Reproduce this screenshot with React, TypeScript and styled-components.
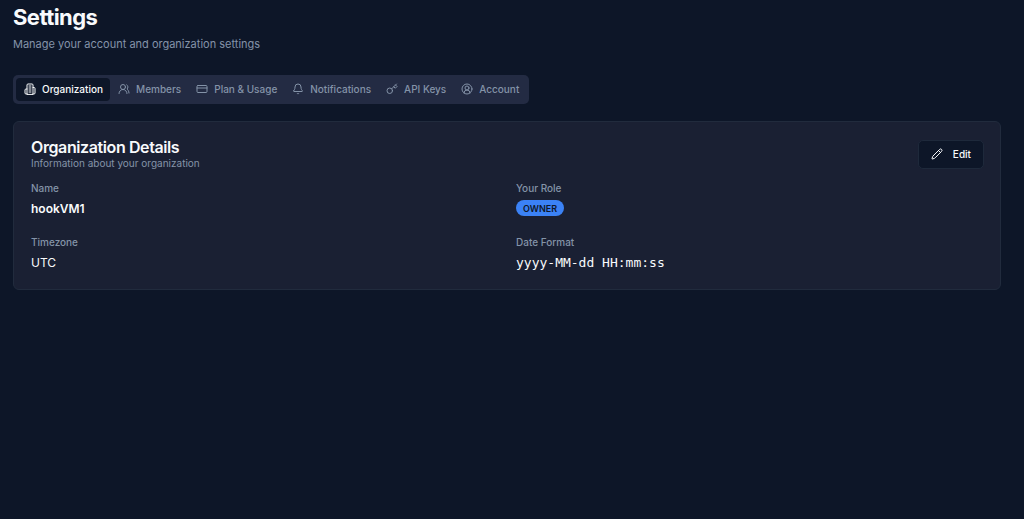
import React from "react";
import styled, { createGlobalStyle, css } from "styled-components";
import { UsersRound, CreditCard, Bell, CircleUserRound, Pencil } from "lucide-react";

const GlobalStyle = createGlobalStyle`
  *, *::before, *::after { box-sizing: border-box; }
  body {
    margin: 0;
    min-height: 100vh;
    background: #0d1628;
    color: #f8fafc;
    font-family: Inter, "Liberation Sans", sans-serif;
  }
`;

const Page = styled.main`
  padding: 4px 23px 24px 13px;
`;

const Title = styled.h1`
  margin: 0;
  font-size: 22px;
  line-height: 26px;
  font-weight: 700;
  letter-spacing: -0.025em;
`;

const Subtitle = styled.p`
  margin: 6px 0 0;
  font-size: 11px;
  line-height: 16px;
  color: #8493a8;
`;

const TabList = styled.div`
  display: inline-flex;
  margin-top: 23px;
  padding: 3px;
  border-radius: 5px;
  background: #232b43;
`;

const Tab = styled.button<{ $active?: boolean }>`
  display: inline-flex;
  align-items: center;
  gap: 6px;
  height: 23px;
  padding: 0 7px 1px 8px;
  border: 0;
  border-radius: 4px;
  background: transparent;
  color: #8493a8;
  font: inherit;
  font-size: 10px;
  line-height: 14px;
  font-weight: 500;
  white-space: nowrap;
  ${(p) => p.$active && css`
    background: #0d1628;
    color: #f8fafc;
  `}
`;

const Card = styled.section`
  margin-top: 17px;
  padding: 17px 16px 17px 17px;
  border: 1px solid #212b3d;
  border-radius: 6px;
  background: #1a2033;
`;

const CardHeader = styled.header`
  display: flex;
  align-items: center;
  justify-content: space-between;
`;

const CardTitle = styled.h2`
  margin: 0;
  font-size: 16px;
  line-height: 17px;
  font-weight: 600;
  letter-spacing: -0.025em;
`;

const CardDescription = styled.p`
  margin: 0;
  font-size: 10px;
  line-height: 14px;
  color: #8493a8;
`;

const EditButton = styled.button`
  display: inline-flex;
  align-items: center;
  gap: 10px;
  height: 29px;
  padding: 0 12px 1px;
  border: 1px solid #1e293b;
  border-radius: 5px;
  background: #0d1628;
  color: #f8fafc;
  font: inherit;
  font-size: 10px;
  line-height: 14px;
  font-weight: 500;
`;

const Details = styled.dl`
  display: grid;
  grid-template-columns: 1fr 1fr;
  gap: 17px;
  margin: 11px 0 0;
`;

const Term = styled.dt`
  font-size: 10px;
  line-height: 14px;
  font-weight: 500;
  color: #8493a8;
`;

const Value = styled.dd<{ $strong?: boolean; $mono?: boolean }>`
  display: flex;
  align-items: center;
  height: 20px;
  margin: 3px 0 0;
  font-size: ${(p) => (p.$mono ? 13 : 12)}px;
  font-weight: ${(p) => (p.$strong ? 600 : 400)};
  font-family: ${(p) => (p.$mono ? '"DejaVu Sans Mono", monospace' : "inherit")};
`;

const Badge = styled.span`
  display: inline-flex;
  align-items: center;
  height: 16px;
  padding: 0 7px;
  border-radius: 8px;
  background: #3b82f6;
  color: #0f172a;
  font-size: 9px;
  font-weight: 600;
`;

type IconProps = { size?: number };

const Stroked = ({ size = 12, children }: IconProps & { children: React.ReactNode }) => (
  <svg
    width={size}
    height={size}
    viewBox="0 0 24 24"
    fill="none"
    stroke="currentColor"
    strokeWidth={2}
    strokeLinecap="round"
    strokeLinejoin="round"
    aria-hidden
  >
    {children}
  </svg>
);

const BuildingIcon = (props: IconProps) => (
  <Stroked {...props}>
    <path d="M6 22V4a2 2 0 0 1 2-2h8a2 2 0 0 1 2 2v18Z" />
    <path d="M6 12H4a2 2 0 0 0-2 2v6a2 2 0 0 0 2 2h2" />
    <path d="M18 9h2a2 2 0 0 1 2 2v9a2 2 0 0 1-2 2h-2" />
    <path d="M10 6h4M10 10h4M10 14h4M10 18h4" />
  </Stroked>
);

const KeyIcon = (props: IconProps) => (
  <Stroked {...props}>
    <circle cx="7.5" cy="15.5" r="5.5" />
    <path d="m21 2-9.6 9.6" />
    <path d="m15.5 7.5 3 3L22 7l-3-3" />
  </Stroked>
);

const tabs = [
  { label: "Organization", Icon: BuildingIcon },
  { label: "Members", Icon: UsersRound },
  { label: "Plan & Usage", Icon: CreditCard },
  { label: "Notifications", Icon: Bell },
  { label: "API Keys", Icon: KeyIcon },
  { label: "Account", Icon: CircleUserRound },
];

export default function App() {
  return (
    <>
      <GlobalStyle />
      <Page>
        <Title>Settings</Title>
        <Subtitle>Manage your account and organization settings</Subtitle>
        <TabList role="tablist" aria-label="Settings sections">
          {tabs.map(({ label, Icon }, i) => (
            <Tab key={label} type="button" role="tab" aria-selected={i === 0} $active={i === 0}>
              <Icon size={12} />
              {label}
            </Tab>
          ))}
        </TabList>
        <Card>
          <CardHeader>
            <div>
              <CardTitle>Organization Details</CardTitle>
              <CardDescription>Information about your organization</CardDescription>
            </div>
            <EditButton type="button">
              <Pencil size={12} />
              Edit
            </EditButton>
          </CardHeader>
          <Details>
            <div>
              <Term>Name</Term>
              <Value $strong>hookVM1</Value>
            </div>
            <div>
              <Term>Your Role</Term>
              <Value><Badge>OWNER</Badge></Value>
            </div>
            <div>
              <Term>Timezone</Term>
              <Value>UTC</Value>
            </div>
            <div>
              <Term>Date Format</Term>
              <Value $mono>yyyy-MM-dd HH:mm:ss</Value>
            </div>
          </Details>
        </Card>
      </Page>
    </>
  );
}
